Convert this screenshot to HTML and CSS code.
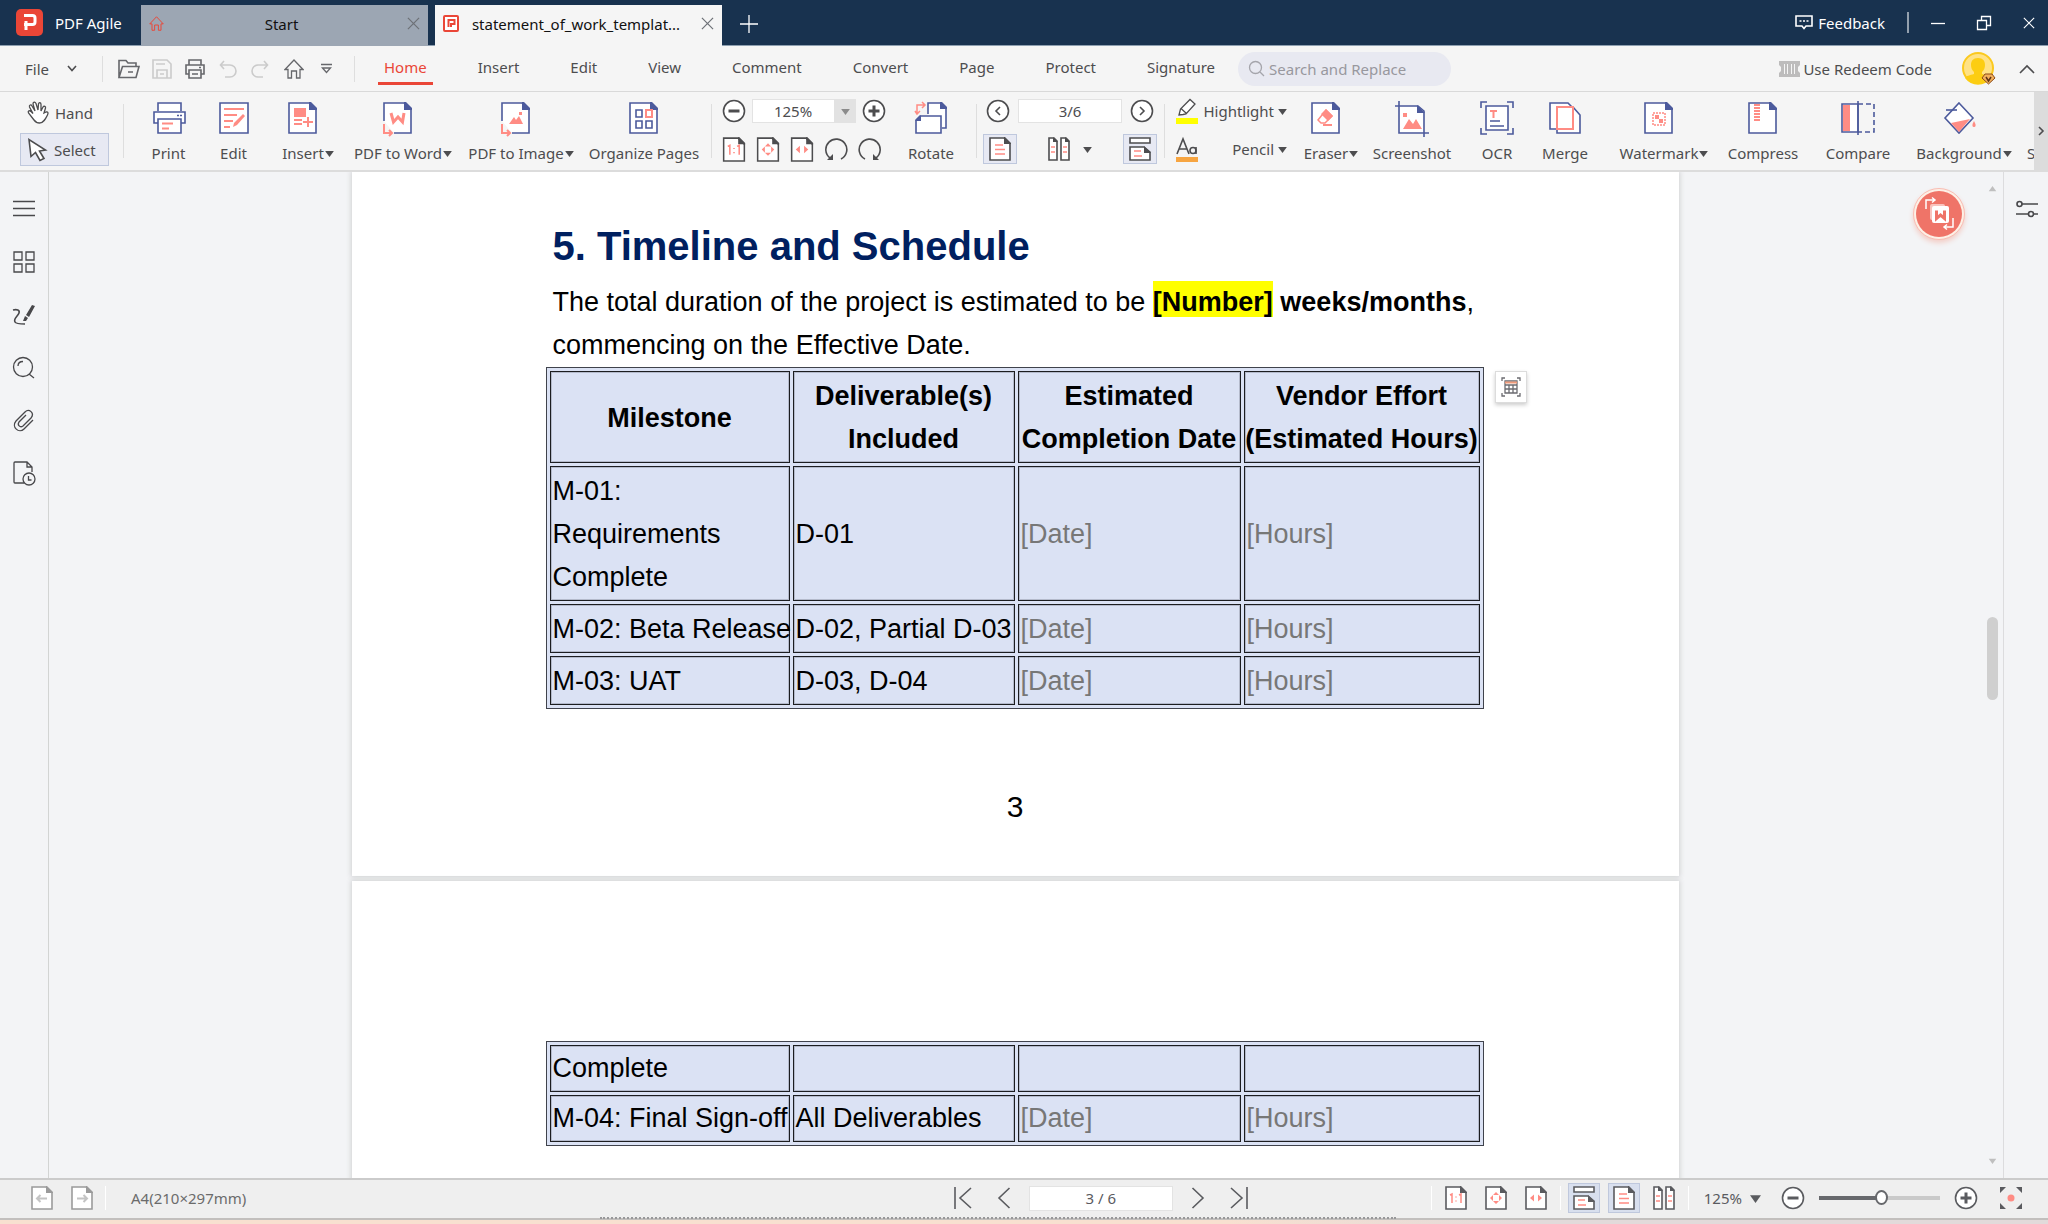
FILE: index.html
```html
<!DOCTYPE html>
<html lang="en">
<head>
<meta charset="utf-8">
<title>PDF Agile</title>
<link rel="stylesheet" href="styles.css">
</head>
<body>
<svg class="sprite" aria-hidden="true">
  <symbol id="caret" viewBox="0 0 10 8"><path d="M0 1h10L5 8z" fill="currentColor"/></symbol>
  <symbol id="x" viewBox="0 0 14 14"><path d="M1 1l12 12M13 1L1 13" class="ln"/></symbol>
  <symbol id="house" viewBox="0 0 20 20"><path d="M1 10.500L10 1l9 9.500h-3V19h-3.500v-7h-5v7H4v-8.500z" class="ln"/></symbol>
  <symbol id="minus" viewBox="0 0 24 24"><circle cx="12" cy="12" r="10.500" fill="#fff" class="lnw"/><path d="M6.500 12h11" class="thick"/></symbol>
  <symbol id="plus" viewBox="0 0 24 24"><circle cx="12" cy="12" r="10.500" fill="#fff" class="lnw"/><path d="M6.500 12h11M12 6.500v11" class="thick"/></symbol>
  <symbol id="sheet" viewBox="0 0 22 24"><path d="M1 1h14l6 6v16H1z" fill="#fff" class="lnw"/><path d="M15 0h1l6 6v1h-7z" fill="currentColor"/></symbol>
  <symbol id="actual" viewBox="0 0 22 24"><use href="#sheet"/><path d="M5 9l2-1v9M14 9l2-1v9M11 10.500v1M11 14.500v1" class="pkt"/></symbol>
  <symbol id="fitpage" viewBox="0 0 22 24"><use href="#sheet"/><path d="M11 6l3 3H8zM11 18l3-3H8zM5 12l3-3v6zM17 12l-3-3v6z" fill="#ff8c84"/></symbol>
  <symbol id="fitwidth" viewBox="0 0 22 24"><use href="#sheet"/><path d="M5 12l4-3.500v7zM17 12l-4-3.500v7z" fill="#ff8c84"/></symbol>
  <symbol id="single" viewBox="0 0 22 24"><use href="#sheet"/><path d="M6 8h8M6 12.500h10M6 17h10" class="pkt"/></symbol>
  <symbol id="facing" viewBox="0 0 22 24"><path d="M1 1h5l3 3v19H1zM13 1h5l3 3v19h-8z" fill="#fff" class="lnw"/><path d="M5 0l5 5H5zM17 0l5 5h-5z" fill="currentColor"/><path d="M3 10h4M3 15h4M15 10h4M15 15h4" class="pkt"/></symbol>
  <symbol id="scroll" viewBox="0 0 22 24"><path d="M1 1h20v5H1zM1 10h14l6 5v8H1z" fill="#fff" class="lnw"/><path d="M15 9l7 7h-7z" fill="currentColor"/><path d="M5 14h7M5 19h8" class="pkt"/></symbol>
  <symbol id="rotl" viewBox="0 0 24 24"><path d="M17 22a10.500 10.500 0 1 0-11-1" class="lnw"/><path d="M3 23h6v-6z" fill="currentColor"/></symbol>
  <symbol id="rotr" viewBox="0 0 24 24"><path d="M7 22a10.500 10.500 0 1 1 11-1" class="lnw"/><path d="M21 23h-6v-6z" fill="currentColor"/></symbol>
  <symbol id="page" viewBox="0 0 34 34"><path d="M3 2h21l6 6v24H3z" fill="#fff" class="bl"/><path d="M23 1h2l6 6v2h-8z" fill="#4c5a9c"/></symbol>
</svg>

<div class="app">
  <header class="titlebar">
    <div class="brand">
      <svg width="27" height="27" viewBox="0 0 27 27"><rect width="27" height="27" rx="5" fill="#ea4637"/><path d="M8 6.500h8.500a2.500 2.500 0 0 1 2.500 2.500v4a2.500 2.500 0 0 1-2.500 2.500H8M10 12v9" fill="none" stroke="#fff" stroke-width="3"/></svg>
      <span>PDF Agile</span>
    </div>
    <div class="doctabs">
      <div class="doctab start">
        <svg class="red" width="15" height="17"><use href="#house"/></svg>
        <a href="#start">Start</a>
        <button aria-label="Close tab"><svg width="13" height="13"><use href="#x"/></svg></button>
      </div>
      <div class="doctab current">
        <svg width="16" height="17" viewBox="0 0 16 17"><rect x="1" y="1" width="14" height="15" rx="1" fill="#fff" stroke="#ea4637" stroke-width="2"/><path d="M5.500 12V5h6v4h-3.500v3" fill="none" stroke="#ea4637" stroke-width="2"/></svg>
        <a href="#doc">statement_of_work_templat...</a>
        <button aria-label="Close tab"><svg width="13" height="13"><use href="#x"/></svg></button>
      </div>
      <button class="newtab" aria-label="New tab"><svg width="18" height="18" viewBox="0 0 18 18"><path d="M9 0v18M0 9h18" class="ln"/></svg></button>
    </div>
    <button class="feedback"><svg width="18" height="15" viewBox="0 0 18 15"><path d="M1 1h16v10h-6l-2 2.500L7 11H1z" class="lnw"/><path d="M4.500 6h2M8 6h2M11.500 6h2" class="lnw"/></svg>Feedback</button>
    <i class="tsep"></i>
    <div class="winctl">
      <button aria-label="Minimize"><svg width="14" height="14" viewBox="0 0 14 14"><path d="M0 7.500h14" class="ln"/></svg></button>
      <button aria-label="Restore"><svg width="14" height="14" viewBox="0 0 14 14"><path d="M.5 4.500h9v9h-9zM4.500 4.500v-4h9v9h-4" class="ln"/></svg></button>
      <button aria-label="Close"><svg width="12" height="12"><use href="#x"/></svg></button>
    </div>
  </header>

  <div class="menubar">
    <button class="file">File<svg width="10" height="7" viewBox="0 0 10 7"><path d="M1 1l4 4.500L9 1" class="lnw"/></svg></button>
    <i class="sep"></i>
    <div class="quick">
      <button aria-label="Open"><svg width="22" height="20" viewBox="0 0 22 20"><path d="M1 18.500V1.500h7l2 2.500h8v3M1 18.500L4.500 7.500H21L18 18.500zM10 13h5" class="lnw"/></svg></button>
      <button aria-label="Save" class="off"><svg width="20" height="20" viewBox="0 0 20 20"><path d="M1 1h14l4 4v14H1zM4 5h9M5 19v-8h10v8M8 15h4" class="lnw"/></svg></button>
      <button aria-label="Print"><svg width="20" height="20" viewBox="0 0 20 20"><path d="M4 6V1h12v5M4 15H1V6h18v9h-3M4 11h12v8H4zM7 15h6M14 8.500h2" class="lnw"/></svg></button>
      <button aria-label="Undo" class="off"><svg width="17" height="18" viewBox="0 0 17 18"><path d="M5 1L1.500 5 5 9M1.500 5H11a5 5 0 0 1 0 12H6" class="lnw"/></svg></button>
      <button aria-label="Redo" class="off"><svg width="17" height="18" viewBox="0 0 17 18"><path d="M12 1l3.500 4L12 9M15.500 5H6a5 5 0 0 0 0 12h5" class="lnw"/></svg></button>
      <button aria-label="Home"><svg width="20" height="20"><use href="#house"/></svg></button>
      <button aria-label="More"><svg width="11" height="12" viewBox="0 0 11 12"><path d="M0 1.500h11M1.500 5l4 4.500 4-4.500z" class="ln"/></svg></button>
    </div>
    <i class="sep"></i>
    <nav class="menus">
      <a href="#home" class="on">Home</a><a href="#insert">Insert</a><a href="#edit">Edit</a><a href="#view">View</a><a href="#comment">Comment</a><a href="#convert">Convert</a><a href="#page">Page</a><a href="#protect">Protect</a><a href="#signature">Signature</a>
    </nav>
    <label class="search"><svg width="17" height="17" viewBox="0 0 17 17"><circle cx="7.500" cy="7.500" r="6" class="ln"/><path d="M12 12l4 4" class="ln"/></svg><input type="text" placeholder="Search and Replace" aria-label="Search and Replace"></label>
    <button class="redeem"><svg width="21" height="16" viewBox="0 0 21 16"><path d="M0 0h21v4l-2 2v4l2 2v4H0v-4l2-2V6L0 4z" fill="#bdbcbc"/><path d="M5.500 3v10M8.500 3v10M12.500 3v10M15.500 3v10" stroke="#f5f5f5"/></svg>Use Redeem Code</button>
    <button class="avatar" aria-label="Account"><svg width="34" height="34" viewBox="0 0 34 34"><circle cx="16" cy="16" r="15" fill="#ffe285" stroke="#fbc91f" stroke-width="2"/><path d="M16 6c-5 0-7 3-7 7 0 3 1 5 3 7v2c-4 1-8 2-9 4a16 16 0 0 0 26 0c-1-2-5-3-9-4v-2c2-2 3-4 3-7 0-4-2-7-7-7z" fill="#fccd12"/><path d="M23 22h7l3 4-6.500 6-6.500-6z" fill="#f3b05c" stroke="#8a4a18"/><path d="M24 25l2.500 4 2.500-4" fill="none" stroke="#5c3317" stroke-width="1.500"/></svg></button>
    <button class="fold" aria-label="Collapse ribbon"><svg width="16" height="10" viewBox="0 0 16 10"><path d="M1 9l7-7 7 7" class="lnw"/></svg></button>
  </div>

  <div class="ribbon">
    <div class="modes">
      <button><svg width="22" height="24" viewBox="0 0 22 24"><path d="M7 19L1.500 12c-1-2 1-3 2.500-1.500l2 2L2.500 6C2 4 4 3 5 5l3 5L6 3c0-2 2-2.500 3-.5L11 9l.5-6c.5-2 2.500-1.500 2.500.5V10l2-4c1-1.500 3-.5 2.500 1L17 12l2-1c2-.5 2.500 1 1.500 3-2 4-4 8-8 8-3 0-4-1-5.500-3z" fill="#fff" class="ln"/></svg>Hand</button>
      <button class="sel"><svg width="21" height="24" viewBox="0 0 21 24"><path d="M2 1.500l2 17 4.500-4 4.500 8 4-2-4.500-7.500 6-1z" fill="#fff" class="lnw"/></svg>Select</button>
    </div>
    <i class="rsep"></i>
    <div class="tools first">
      <button class="tool w65"><svg width="34" height="34" viewBox="0 0 34 34"><path d="M6 10V2h23v8M6 22H2V11h31v11h-4" fill="#fff" class="bl"/><path d="M6 18h23v14H6z" fill="#fff" class="bl"/><path d="M10 22.500h11M10 27.500h7" class="pk"/><path d="M25 14.500h2M28 14.500h2" class="bl"/></svg>Print</button>
      <button class="tool w65"><svg width="34" height="34" viewBox="0 0 34 34"><path d="M3 2h28v30H3z" fill="#fff" class="bl"/><path d="M7 8h20M7 14h13M7 20h9M7 26h6" class="pk"/><path d="M16 26l1-4 9-9 2 2-8 9z" fill="#ff8c84"/></svg>Edit</button>
      <button class="tool w84"><svg class="lead" width="34" height="34" viewBox="0 0 34 34"><use href="#page"/><path d="M8 7h12v9H8z" fill="#ff8c84"/><path d="M8 19h8M8 23h8M22 16v10M17 21h10" class="pk"/></svg><span>Insert<svg width="9" height="7"><use href="#caret"/></svg></span></button>
      <button class="tool w106"><svg class="lead" width="34" height="34" viewBox="0 0 34 34"><path d="M3 20V2h20l7 7v23H13" fill="#fff" class="bl"/><path d="M23 1h2l6 6v2h-8z" fill="#4c5a9c"/><path d="M10 12l2.500 9 4.500-5 4.500 5 1.500-9" fill="none" stroke="#ff8c84" stroke-width="3"/><path d="M3 23v9h7M8 29l3 3-3 3" class="pk"/></svg><span>PDF to Word<svg width="9" height="7"><use href="#caret"/></svg></span></button>
      <button class="tool w130"><svg class="lead" width="34" height="34" viewBox="0 0 34 34"><path d="M3 20V2h20l7 7v23H13" fill="#fff" class="bl"/><path d="M23 1h2l6 6v2h-8z" fill="#4c5a9c"/><path d="M10 23l5-7 2 3 3-4 4 8zM20 11h3v3h-3z" fill="#ff8c84"/><path d="M3 23v9h7M8 29l3 3-3 3" class="pk"/></svg><span>PDF to Image<svg width="9" height="7"><use href="#caret"/></svg></span></button>
      <button class="tool w116"><svg width="34" height="34" viewBox="0 0 34 34"><use href="#page"/><path d="M9 9h6v7H9zM9 20h6v7H9zM19 20h6v7h-6z" class="bl"/><path d="M19 9h6v7h-6z" class="pk"/></svg>Organize Pages</button>
    </div>
    <i class="rsep"></i>
    <div class="pair zoomset">
      <div class="prow">
        <button aria-label="Zoom out"><svg width="24" height="24"><use href="#minus"/></svg></button>
        <div class="zoomsel"><select aria-label="Zoom"><option>125%</option></select><span><svg width="9" height="7"><use href="#caret"/></svg></span></div>
        <button aria-label="Zoom in"><svg width="24" height="24"><use href="#plus"/></svg></button>
      </div>
      <div class="prow views">
        <button aria-label="Actual size"><svg width="24" height="25"><use href="#actual"/></svg></button>
        <button aria-label="Fit page"><svg width="24" height="25"><use href="#fitpage"/></svg></button>
        <button aria-label="Fit width"><svg width="24" height="25"><use href="#fitwidth"/></svg></button>
        <button aria-label="Rotate left"><svg width="24" height="24"><use href="#rotl"/></svg></button>
        <button aria-label="Rotate right"><svg width="24" height="24"><use href="#rotr"/></svg></button>
      </div>
    </div>
    <button class="tool w90"><svg width="34" height="34" viewBox="0 0 34 34"><path d="M14 13V2h13l5 5v20h-4" fill="#fff" class="bl"/><path d="M26 1h2l5 5v2h-7z" fill="#4c5a9c"/><path d="M2 32V19l4-4h21v17z" fill="#fff" class="bl"/><path d="M1 20l6-6v6z" fill="#4c5a9c"/><path d="M3 13V4h8M8 1l3 3-3 3M1 10l2 3 3-3" class="pkt"/></svg>Rotate</button>
    <i class="rsep"></i>
    <div class="pair pageset">
      <div class="prow">
        <button aria-label="Previous page"><svg width="24" height="24" viewBox="0 0 24 24"><circle cx="12" cy="12" r="10.500" fill="#fff" class="lnw"/><path d="M14 8l-4 4 4 4" class="lnw"/></svg></button>
        <input type="text" value="3/6" aria-label="Page">
        <button aria-label="Next page"><svg width="24" height="24" viewBox="0 0 24 24"><circle cx="12" cy="12" r="10.500" fill="#fff" class="lnw"/><path d="M10 8l4 4-4 4" class="lnw"/></svg></button>
      </div>
      <div class="prow spread">
        <button class="boxed" aria-label="Single page"><svg width="22" height="24"><use href="#single"/></svg></button>
        <button class="duo" aria-label="Facing pages"><svg width="22" height="24"><use href="#facing"/></svg><svg width="9" height="7"><use href="#caret"/></svg></button>
        <button class="boxed" aria-label="Continuous"><svg width="22" height="24"><use href="#scroll"/></svg></button>
      </div>
    </div>
    <i class="rsep"></i>
    <div class="marks">
      <button><svg width="22" height="25" viewBox="0 0 22 25"><path d="M3 16l1.500-6L14 .5l5 4.500-9 10-3 .5zM5 9.500l5.500 5" fill="#fff" class="ln"/><path d="M0 19h22v6H0z" fill="#ff0"/></svg><span>Hightlight</span><svg width="9" height="7"><use href="#caret"/></svg></button>
      <button><svg width="22" height="25" viewBox="0 0 22 25"><path d="M1 17L7 2l6 15M3 12h8" class="lnw"/><circle cx="17" cy="13.500" r="3" class="lnw"/><path d="M20 10v7" class="lnw"/><path d="M0 20h22v5H0z" fill="#f7a541"/></svg><span>Pencil</span><svg width="9" height="7"><use href="#caret"/></svg></button>
    </div>
    <div class="tools">
      <button class="tool w60"><svg class="lead" width="34" height="34" viewBox="0 0 34 34"><use href="#page"/><path d="M17 9l6 6-7 7H12l-3-3z" class="pkt"/><path d="M17 8l7 7-5 5-7-7zM14 23h9v2h-9z" fill="#ff8c84"/></svg><span>Eraser<svg width="9" height="7"><use href="#caret"/></svg></span></button>
      <button class="tool w102"><svg width="34" height="34" viewBox="0 0 34 34"><path d="M4 0v32h30M0 5h23l6 5v26" fill="none" class="bl"/><path d="M5 6h18v5h5v20H5z" fill="#fff"/><path d="M22 4l8 8h-8z" fill="#4c5a9c"/><path d="M8 28l6-10 4 5 3-5 6 10zM8 12h4v4H8z" fill="#ff8c84"/></svg>Screenshot</button>
      <button class="tool w68"><svg width="34" height="34" viewBox="0 0 34 34"><path d="M6 5h22v24H6z" fill="#fff" class="bl"/><path d="M1 7V1h6M27 1h6v6M1 27v6h6M27 33h6v-6M10 20h10M10 25h14" class="bl"/><path d="M10 10h7M13.500 10v7" class="pk"/></svg>OCR</button>
      <button class="tool w68"><svg width="34" height="34" viewBox="0 0 34 34"><path d="M2 2h18l5 5v21H2z" fill="#fff" class="bl"/><path d="M9 6h16l7 8v18H9z" fill="#fff" class="bl"/><path d="M9 6h16v22H9z" class="pk"/></svg>Merge</button>
      <button class="tool w130"><svg class="lead" width="34" height="34" viewBox="0 0 34 34"><use href="#page"/><path d="M11 12h12v12H11z" class="pkt dots"/><path d="M13 14h4v4h4v4h-4v-4h-4z" fill="#ff8c84"/></svg><span>Watermark<svg width="9" height="7"><use href="#caret"/></svg></span></button>
      <button class="tool w68"><svg width="34" height="34" viewBox="0 0 34 34"><use href="#page"/><path d="M11 3v17" fill="none" stroke="#ff8c84" stroke-width="6" stroke-dasharray="2 1"/></svg>Compress</button>
      <button class="tool w122"><svg width="34" height="34" viewBox="0 0 34 34"><path d="M1 3h16v28H1z" fill="#fff" class="bl"/><path d="M2 4h7v26H2z" fill="#ff8c84"/><path d="M17 3h16v28H17" class="bl dash"/><path d="M17 0v34" class="bl"/></svg>Compare</button>
      <button class="tool w90"><svg class="lead" width="34" height="34" viewBox="0 0 34 34"><path d="M17 2l14 15-14 15L3 17z" fill="#fff" class="bl"/><path d="M9 22l19-4-11 13z" fill="#ff8c84"/><path d="M4 9h11" class="bl"/><path d="M32 20c3 5 1 6 0 6s-3-1 0-6z" fill="#ff8c84"/></svg><span>Background<svg width="9" height="7"><use href="#caret"/></svg></span></button>
      <button class="tool cut">S</button>
    </div>
    <button class="more" aria-label="Scroll ribbon"><svg width="6" height="10" viewBox="0 0 6 10"><path d="M1 1l4 4-4 4" class="lnw"/></svg></button>
  </div>

  <main class="work">
    <aside class="rail">
      <button aria-label="Outline"><svg width="24" height="24" viewBox="0 0 24 24"><path d="M1 4.500h22M1 11.500h22M1 18.500h22" class="ln"/></svg></button>
      <button aria-label="Thumbnails"><svg width="24" height="24" viewBox="0 0 24 24"><path d="M2 2h8v8H2zM14 2h8v8h-8zM2 14h8v8H2zM14 14h8v8h-8z" class="ln"/></svg></button>
      <button aria-label="Annotations"><svg width="24" height="24" viewBox="0 0 24 24"><path d="M1 7c4-1 7 0 6 3s-6 6-4 9c1 2 6 2 10 2" class="lnw"/><path d="M20 2l3 1-6 11-3-2zM13 13l3 2-2 3h-3z" fill="currentColor"/></svg></button>
      <button aria-label="Search"><svg width="24" height="24" viewBox="0 0 24 24"><circle cx="11" cy="11" r="9.500" class="ln"/><path d="M6 10c0-3 2-4.500 5-4.500M17 18l5 4" class="ln"/></svg></button>
      <button aria-label="Attachments"><svg width="24" height="24" viewBox="0 0 24 24"><path d="M21 11l-9 9c-5 5-13-2-8-8l9-9c4-4 10 1 6 6l-8 8c-3 2-6-1-4-4l7-7" class="ln"/></svg></button>
      <button aria-label="History"><svg width="24" height="26" viewBox="0 0 24 26"><path d="M12 22H3a1 1 0 0 1-1-1V2a1 1 0 0 1 1-1h12l5 5v5M15 1v5h5" class="ln"/><circle cx="17" cy="18" r="6" class="ln"/><path d="M16.500 15v4h3" class="ln"/></svg></button>
    </aside>

    <section class="viewer">
      <article class="sheet one">
        <h1>5. Timeline and Schedule</h1>
        <p>The total duration of the project is estimated to be <b><mark>[Number]</mark> weeks/months</b>, commencing on the Effective Date.</p>
        <div class="tablebox">
          <table>
            <colgroup><col class="c1"><col class="c2"><col class="c3"><col class="c4"></colgroup>
            <tr><th>Milestone</th><th>Deliverable(s)<br>Included</th><th>Estimated<br>Completion Date</th><th>Vendor Effort<br>(Estimated Hours)</th></tr>
            <tr><td>M-01:<br>Requirements<br>Complete</td><td>D-01</td><td class="ph">[Date]</td><td class="ph">[Hours]</td></tr>
            <tr><td>M-02: Beta Release</td><td>D-02, Partial D-03</td><td class="ph">[Date]</td><td class="ph">[Hours]</td></tr>
            <tr><td>M-03: UAT</td><td>D-03, D-04</td><td class="ph">[Date]</td><td class="ph">[Hours]</td></tr>
          </table>
          <button class="tabletool" aria-label="Extract table"><svg width="20" height="20" viewBox="0 0 20 20"><path d="M1 4V1h3M16 1h3v3M1 16v3h3M16 19h3v-3M4 4h12v12H4zM4 8h12M4 12h12M8 8v8M12 8v8" class="ln"/><path d="M4 5.500h12" stroke="#ef9a7a" stroke-width="2"/></svg></button>
        </div>
        <footer>3</footer>
      </article>
      <article class="sheet two">
        <div class="tablebox">
          <table>
            <colgroup><col class="c1"><col class="c2"><col class="c3"><col class="c4"></colgroup>
            <tr><td>Complete</td><td></td><td></td><td></td></tr>
            <tr><td>M-04: Final Sign-off</td><td>All Deliverables</td><td class="ph">[Date]</td><td class="ph">[Hours]</td></tr>
          </table>
        </div>
      </article>
      <button class="convert" aria-label="Convert to Word"><svg width="46" height="46" viewBox="0 0 46 46"><circle cx="23" cy="23" r="23" fill="#ef7468"/><path d="M10 18v-9h8M16 6.500l3 2.500-3 2.500M37 27v9h-8M31 33.500l-3 2.500 3 2.500" fill="none" stroke="#fff" stroke-width="1.500"/><rect x="14" y="13" width="15" height="16" rx="2" fill="#f9c3bd"/><rect x="16" y="15" width="17" height="17" rx="2" fill="#fff"/><path d="M20.500 19.500v8l4-3.500 4 3.500v-8" fill="none" stroke="#ef7468" stroke-width="3"/></svg></button>
    </section>
    <div class="vscroll"><svg class="up" width="9" height="6"><use href="#caret"/></svg><i class="thumb"></i><svg width="9" height="6"><use href="#caret"/></svg></div>
    <aside class="rail right">
      <button aria-label="Properties"><svg width="24" height="20" viewBox="0 0 24 20"><path d="M7 5h16M1 15h12M19 15h4" class="lnw"/><circle cx="4.500" cy="5" r="2.500" class="lnw"/><circle cx="16" cy="15" r="2.500" class="lnw"/></svg></button>
    </aside>
  </main>

  <footer class="status">
    <button class="off" aria-label="Back"><svg width="22" height="24" viewBox="0 0 22 24"><use href="#sheet"/><path d="M6 12.500h10M9.500 9L6 12.500 9.500 16" class="faint"/></svg></button>
    <button class="off" aria-label="Forward"><svg width="22" height="24" viewBox="0 0 22 24"><use href="#sheet"/><path d="M6 12.500h10M12.500 9l3.500 3.500-3.500 3.500" class="faint"/></svg></button>
    <i class="ssep"></i>
    <span class="size">A4(210×297mm)</span>
    <div class="pager">
      <button aria-label="First page"><svg width="18" height="22" viewBox="0 0 18 22"><path d="M1 0v22M17 1L6 11l11 10" class="lnw"/></svg></button>
      <button aria-label="Previous page"><svg width="12" height="22" viewBox="0 0 12 22"><path d="M11.500 1L1 11l10.500 10" class="lnw"/></svg></button>
      <input type="text" value="3 / 6" aria-label="Page number">
      <button aria-label="Next page"><svg width="12" height="22" viewBox="0 0 12 22"><path d="M.5 1L11 11 .5 21" class="lnw"/></svg></button>
      <button aria-label="Last page"><svg width="18" height="22" viewBox="0 0 18 22"><path d="M17 0v22M1 1l11 10L1 21" class="lnw"/></svg></button>
    </div>
    <div class="fits">
      <i class="ssep"></i>
      <button aria-label="Actual size"><svg width="22" height="24"><use href="#actual"/></svg></button>
      <button aria-label="Fit page"><svg width="22" height="24"><use href="#fitpage"/></svg></button>
      <button aria-label="Fit width"><svg width="22" height="24"><use href="#fitwidth"/></svg></button>
      <i class="ssep"></i>
    </div>
    <div class="modesets">
      <button class="boxed" aria-label="Continuous"><svg width="22" height="24"><use href="#scroll"/></svg></button>
      <button class="boxed" aria-label="Single page"><svg width="22" height="24"><use href="#single"/></svg></button>
      <button aria-label="Facing pages"><svg width="22" height="24"><use href="#facing"/></svg></button>
      <i class="ssep"></i>
    </div>
    <div class="zoombar">
      <button class="pct">125%<svg width="11" height="9"><use href="#caret"/></svg></button>
      <button aria-label="Zoom out"><svg width="24" height="24"><use href="#minus"/></svg></button>
      <input type="range" min="0" max="100" value="52" aria-label="Zoom level">
      <button aria-label="Zoom in"><svg width="24" height="24"><use href="#plus"/></svg></button>
    </div>
    <button class="full" aria-label="Full screen"><svg width="22" height="22" viewBox="0 0 22 22"><path d="M0 0h6L0 6zM22 0v6l-6-6zM0 22v-6l6 6zM22 22h-6l6-6z" fill="#5a5b5f"/><circle cx="11" cy="11" r="3.500" fill="#ff8c84"/></svg></button>
  </footer>
  <div class="desk"><i></i></div>
</div>
</body>
</html>
```

FILE: styles.css
```css
* { box-sizing: border-box; }
body {
  margin: 0;
  font: 15px/20px "Noto Sans", "Open Sans", sans-serif;
  color: #4d4d4f;
  background: #f5f5f5;
}
button, input, select { font: inherit; color: inherit; margin: 0; }
button { border: 0; padding: 0; background: none; display: flex; align-items: center; justify-content: center; white-space: nowrap; }
a { color: inherit; text-decoration: none; }
svg { display: block; flex: none; overflow: visible; }
.sprite { position: absolute; width: 0; height: 0; }
.ln { stroke: currentColor; stroke-width: 1.3; fill: none; }
.lnw { stroke: currentColor; stroke-width: 1.6; }
path.lnw:not([fill]), circle.lnw:not([fill]) { fill: none; }
path.ln[fill="#fff"] { fill: #fff; }
.thick { stroke: currentColor; stroke-width: 3; }
.bl { stroke: #4c5a9c; stroke-width: 1.6; }
.bl:not([fill]) { fill: none; }
.pk, .pkt { stroke: #ff8c84; stroke-width: 2; fill: none; }
.pkt { stroke-width: 1.5; }
.faint { stroke: #c4c4c4; stroke-width: 2; fill: none; }
.dots { stroke-dasharray: 2 1; }
.dash { stroke-dasharray: 5 3; }
.off { color: #cbcbcb; }

.app { display: flex; flex-direction: column; height: 100vh; }

/* title bar */
.titlebar { height: 46px; flex: none; display: flex; align-items: center; background: #18324f; color: #fff; border-bottom: 1px solid #8d9fb0; }
.brand { display: flex; align-items: center; gap: 12px; width: 141px; padding-left: 16px; }
.doctabs { display: flex; align-self: stretch; align-items: flex-end; gap: 7px; flex: 1; margin-bottom: -1px; }
.doctab { width: 287px; height: 41px; display: flex; align-items: center; padding: 0 8px 4px; color: #111; }
.doctab.start { background: #9ca6b3; }
.doctab.current { background: #f5f5f5; }
.doctab a { flex: 1; text-align: center; padding-right: 8px; }
.doctab button { color: #6d7177; }
.doctab .red { color: #ea4637; }
.newtab { height: 41px; margin-left: 11px; padding-bottom: 4px; }
.feedback { gap: 5px; }
.tsep { width: 2px; height: 21px; background: #93a0ae; margin: 0 22px; }
.winctl { display: flex; gap: 32px; margin-right: 13px; }

/* menu bar */
.menubar { height: 46px; flex: none; display: flex; align-items: center; border-bottom: 1px solid #d9d9d9; }
.sep { width: 1px; height: 26px; background: #dedede; }
.file { gap: 18px; width: 102px; }
.quick { display: flex; align-items: center; width: 251px; padding-left: 9px; color: #66676b; }
.quick button { width: 33px; }
.menus { display: flex; gap: 51px; padding-left: 29px; }
.menus a { height: 32px; line-height: 28px; }
.menus .on { color: #ea4637; border-bottom: 3px solid #ea4637; margin: 0 -6px; padding: 0 6px; }
.search { display: flex; align-items: center; gap: 4px; width: 213px; height: 34px; margin-left: 23px; padding-left: 10px; border-radius: 17px; background: #e8e9f1; color: #a5a5ab; }
.search input { border: 0; background: none; padding: 0; min-width: 0; width: 180px; }
.search input::placeholder { color: #98989e; opacity: 1; }
.redeem { gap: 3px; margin-left: auto; }
.avatar { margin-left: 30px; }
.fold { margin: 0 13px 0 23px; }

/* ribbon */
.ribbon { height: 80px; flex: none; display: flex; padding-top: 4px; border-bottom: 2px solid #dcdcdc; overflow: hidden; position: relative; }
.rsep { flex: none; width: 1px; height: 54px; margin-top: 8px; background: #dedede; }
.modes { display: flex; flex-direction: column; gap: 4px; width: 123px; padding-left: 20px; flex: none; }
.modes button { width: 89px; height: 33px; gap: 6px; justify-content: flex-start; padding-left: 6px; border: 1px solid transparent; }
.modes .sel { background: #e7e9f3; border-color: #bfc8dd; }
.tools { display: flex; flex: none; }
.first { padding: 0 9px 0 12px; }
.tool { flex: none; flex-direction: column; justify-content: flex-start; height: 72px; padding-top: 5px; gap: 8px; }
.tool span { display: flex; align-items: center; gap: 1px; }
.lead { margin-right: 10px; }
.w60 { width: 60px; }
.w65 { width: 65px; }
.w68 { width: 68px; }
.w84 { width: 84px; }
.w90 { width: 90px; }
.w102 { width: 102px; }
.w106 { width: 106px; }
.w116 { width: 116px; }
.w122 { width: 122px; }
.w130 { width: 130px; }
.pair { display: flex; flex-direction: column; gap: 8px; flex: none; }
.prow { display: flex; align-items: center; height: 30px; }
.zoomset { padding-left: 10px; }
.zoomset .prow { gap: 6px; }
.zoomset .views { gap: 10px; }
.zoomsel { display: grid; width: 104px; height: 24px; }
.zoomsel select, .zoomsel span { grid-area: 1 / 1; }
.zoomsel select { appearance: none; border: 1px solid #e3e3e3; border-radius: 0; background: #fff; padding: 0 22px 0 0; text-align: center; text-align-last: center; }
.zoomsel span { justify-self: end; width: 22px; display: grid; place-items: center; background: #e2e2e2; color: #8b8b8b; pointer-events: none; }
.pageset { width: 187px; padding: 0 7px 0 6px; }
.pageset .prow { justify-content: center; gap: 8px; }
.pageset .spread { justify-content: space-between; }
.pageset input { width: 104px; height: 24px; border: 1px solid #e3e3e3; padding: 0; text-align: center; background: #fff; }
.boxed { width: 34px; height: 30px; background: #e7e9f3; border: 1px solid #bfc8dd; }
.duo { gap: 13px; }
.marks { display: flex; flex-direction: column; gap: 8px; width: 136px; padding-left: 11px; flex: none; }
.marks button { height: 30px; gap: 4px; justify-content: flex-start; }
.marks span { width: 72px; text-align: right; }
.cut { width: 40px; padding: 47px 0 0 18px; align-items: flex-start; }
.more { position: absolute; right: 0; top: 0; bottom: 0; width: 14px; background: #dcdcdc; }

/* work area */
.work { flex: 1; min-height: 0; display: flex; background: #f3f4f6; }
.rail { width: 49px; flex: none; border-right: 1px solid #d2d4d3; display: flex; flex-direction: column; align-items: center; gap: 29px; padding: 25px 1px 0 0; color: #48484b; }
.rail button { height: 24px; }
.right { width: 45px; border-right: 0; border-left: 1px solid #dcdcde; padding-left: 2px; }
.viewer { flex: 1; min-width: 0; overflow: hidden; position: relative; display: flex; flex-direction: column; align-items: center; gap: 5px; }
.sheet { width: 100%; max-width: 1327px; flex: none; background: #fff; padding: 0 195px 0 201px; box-shadow: 0 0 5px 1px #d0d2d3; color: #000; font: 27px/43px "Liberation Sans", Arial, sans-serif; }
.one { padding-top: 49px; padding-bottom: 48px; }
.two { padding-top: 160px; padding-bottom: 120px; }
h1 { margin: 0; font-size: 40px; line-height: 50px; color: #002060; }
p { margin: 10px 0 0; }
mark { background: #ff0; color: inherit; padding-top: 6px; }
.tablebox { position: relative; margin: 0 0 0 -7px; }
table { width: 100%; table-layout: fixed; border: 1px solid #40434c; border-spacing: 3px; background: #dbe2f4; }
td, th { border: 1px solid #1c1d20; box-shadow: inset 0 0 0 1px #b4bacb; padding: 3px 2px 1px; height: 49px; text-align: left; white-space: nowrap; }
th { text-align: center; padding: 3px 0 1px; }
.two td { padding: 1px 2px; height: 47px; }
.c1 { width: 240px; }
.c2 { width: 222px; }
.c3 { width: 223px; }
.ph { color: #777; }
.tabletool { position: absolute; left: 100%; top: 4px; margin-left: 11px; width: 32px; height: 32px; background: #fff; border: 1px solid #dcdcdc; box-shadow: 0 2px 4px #ccc; color: #6b6b70; }
.sheet footer { margin: 76px -195px 0 -201px; font-size: 30px; text-align: center; }
.convert { position: absolute; right: 16px; top: 16px; width: 52px; height: 52px; border: 1px solid #f9bdb3; border-radius: 50%; background: #fdf0e6; box-shadow: 0 3px 5px #f3cfc8; }
.vscroll { width: 22px; flex: none; display: flex; flex-direction: column; align-items: center; justify-content: space-between; padding: 14px 0; color: #bfbfbf; }
.vscroll .up { transform: scaleY(-1); }
.thumb { width: 11px; height: 83px; border-radius: 6px; background: #cfcfcf; margin-bottom: 34px; }

/* status bar */
.status { height: 40px; flex: none; display: flex; align-items: center; background: #efefef; border-top: 2px solid #cbcbcb; padding: 0 26px 2px 31px; color: #5a5b5f; }
.status .off { width: 22px; margin-right: 18px; color: #9b9b9b; }
.ssep { width: 1px; height: 24px; background: #fff; }
.status .off + .ssep { margin-left: -6px; }
.size { margin-left: 25px; color: #6b6b6b; }
.pager { display: flex; align-items: center; gap: 26px; margin-left: auto; }
.pager input { width: 144px; height: 25px; margin: 0 -7px; border: 1px solid #e3e3e3; padding: 0; text-align: center; background: #fff; }
.fits, .modesets, .zoombar { display: flex; align-items: center; }
.fits { gap: 18px; margin-left: 188px; }
.fits .ssep { margin: 0 -5px; }
.modesets { gap: 8px; margin-left: 12px; }
.modesets .boxed { width: 32px; background: #d8dfee; }
.modesets button:not(.boxed) { width: 32px; }
.zoombar { gap: 14px; margin-left: 15px; }
.pct { gap: 8px; margin-right: 6px; }
.zoombar input { appearance: none; width: 121px; height: 15px; background: none; }
.zoombar input::-webkit-slider-runnable-track { height: 4px; background: linear-gradient(to right, #67686c 52%, #cacaca 52%); }
.zoombar input::-webkit-slider-thumb { appearance: none; width: 13px; height: 15px; margin-top: -6px; border: 2px solid #67686c; border-radius: 50%; background: #fff; }
.full { margin-left: 22px; }

/* desktop edge under the window */
.desk { height: 6px; flex: none; border-top: 2px solid #c2bfbd; background: linear-gradient(to right, #f8e0d0 60%, #e2dada 75%); }
.desk i { display: block; width: 796px; margin: -3px 0 0 600px; border-top: 2px dotted #98989a; }
```
